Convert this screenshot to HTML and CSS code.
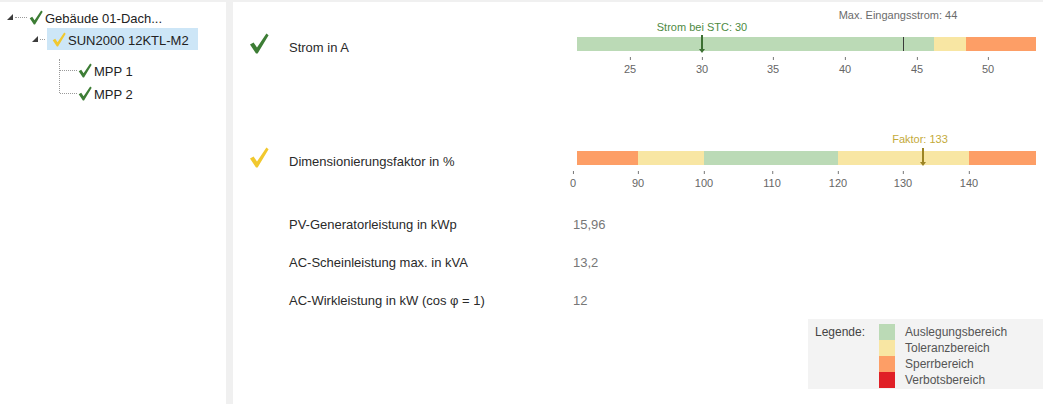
FILE: index.html
```html
<!DOCTYPE html>
<html lang="de">
<head>
    <meta charset="UTF-8">
    <meta name="viewport" content="width=device-width, initial-scale=1.0">
    <title>Auslegung</title>
    <link rel="stylesheet" href="styles.css">
</head>
<body>
<div class="app">

    <!-- Anlagenbaum -->
    <aside class="tree">
        <div class="node node-root">
            <span class="expander"></span>
            <span class="dots dots-short"></span>
            <svg class="tick-icon small ok" viewBox="0 0 20 21"><path d="M1 11.5 L4.6 9.4 L8 14.6 L17.4 0.6 L19.6 2.2 L8.6 20.6 L7 20.6 Z"/></svg>
            <span class="node-text">Gebäude 01-Dach...</span>
        </div>
        <div class="node node-child">
            <span class="expander"></span>
            <span class="dots dots-tiny"></span>
            <div class="node-selected">
                <svg class="tick-icon small warn" viewBox="0 0 20 21"><path d="M1 11.5 L4.6 9.4 L8 14.6 L17.4 0.6 L19.6 2.2 L8.6 20.6 L7 20.6 Z"/></svg>
                <span class="node-text">SUN2000 12KTL-M2</span>
            </div>
        </div>
        <div class="leaves">
            <div class="node node-leaf">
                <span class="dots dots-leaf"></span>
                <svg class="tick-icon small ok" viewBox="0 0 20 21"><path d="M1 11.5 L4.6 9.4 L8 14.6 L17.4 0.6 L19.6 2.2 L8.6 20.6 L7 20.6 Z"/></svg>
                <span class="node-text">MPP 1</span>
            </div>
            <div class="node node-leaf">
                <span class="dots dots-leaf"></span>
                <svg class="tick-icon small ok" viewBox="0 0 20 21"><path d="M1 11.5 L4.6 9.4 L8 14.6 L17.4 0.6 L19.6 2.2 L8.6 20.6 L7 20.6 Z"/></svg>
                <span class="node-text">MPP 2</span>
            </div>
        </div>
    </aside>

    <div class="divider"></div>

    <!-- Details -->
    <main class="details">

        <section class="metric metric-chart metric-first">
            <svg class="tick-icon big ok" viewBox="0 0 20 21"><path d="M1 11.5 L4.6 9.4 L8 14.6 L17.4 0.6 L19.6 2.2 L8.6 20.6 L7 20.6 Z"/></svg>
            <div class="metric-label">Strom in A</div>
            <div class="chart">
                <span class="note note-max" style="left: 321px;">Max. Eingangsstrom: 44</span>
                <span class="note note-ok" style="left: 125px;">Strom bei STC: 30</span>
                <div class="bar">
                    <span class="band band-ok" style="width: 357px;"></span>
                    <span class="band band-tol" style="width: 32px;"></span>
                    <span class="band band-lock" style="width: 70px;"></span>
                </div>
                <span class="limit" style="left: 326px;"></span>
                <span class="marker marker-ok" style="left: 125px;"></span>
                <div class="axis">
                    <span class="axis-tick" style="left: 53px;">25</span>
                    <span class="axis-tick" style="left: 125px;">30</span>
                    <span class="axis-tick" style="left: 196px;">35</span>
                    <span class="axis-tick" style="left: 268px;">40</span>
                    <span class="axis-tick" style="left: 340px;">45</span>
                    <span class="axis-tick" style="left: 411px;">50</span>
                </div>
            </div>
        </section>

        <section class="metric metric-chart">
            <svg class="tick-icon big warn" viewBox="0 0 20 21"><path d="M1 11.5 L4.6 9.4 L8 14.6 L17.4 0.6 L19.6 2.2 L8.6 20.6 L7 20.6 Z"/></svg>
            <div class="metric-label">Dimensionierungsfaktor in %</div>
            <div class="chart">
                <span class="note note-warn" style="left: 343px;">Faktor: 133</span>
                <div class="bar">
                    <span class="band band-lock" style="width: 61px;"></span>
                    <span class="band band-tol" style="width: 66px;"></span>
                    <span class="band band-ok" style="width: 134px;"></span>
                    <span class="band band-tol" style="width: 131px;"></span>
                    <span class="band band-lock" style="width: 67px;"></span>
                </div>
                <span class="marker marker-warn" style="left: 346px;"></span>
                <div class="axis">
                    <span class="axis-tick" style="left: -4px;">0</span>
                    <span class="axis-tick" style="left: 61px;">90</span>
                    <span class="axis-tick" style="left: 127px;">100</span>
                    <span class="axis-tick" style="left: 195px;">110</span>
                    <span class="axis-tick" style="left: 261px;">120</span>
                    <span class="axis-tick" style="left: 326px;">130</span>
                    <span class="axis-tick" style="left: 392px;">140</span>
                </div>
            </div>
        </section>

        <section class="metric metric-plain">
            <span></span>
            <div class="metric-label">PV-Generatorleistung in kWp</div>
            <div class="metric-value">15,96</div>
        </section>

        <section class="metric metric-plain">
            <span></span>
            <div class="metric-label">AC-Scheinleistung max. in kVA</div>
            <div class="metric-value">13,2</div>
        </section>

        <section class="metric metric-plain">
            <span></span>
            <div class="metric-label">AC-Wirkleistung in kW (cos φ = 1)</div>
            <div class="metric-value">12</div>
        </section>

        <div class="legend">
            <div class="legend-title">Legende:</div>
            <ul class="legend-list">
                <li><span class="swatch band-ok"></span>Auslegungsbereich</li>
                <li><span class="swatch band-tol"></span>Toleranzbereich</li>
                <li><span class="swatch band-lock"></span>Sperrbereich</li>
                <li><span class="swatch band-ban"></span>Verbotsbereich</li>
            </ul>
        </div>
    </main>
</div>
</body>
</html>
```

FILE: styles.css
```css
/* General */
body {
    margin: 0;
    background-color: #f0f0f0;
    font-family: "Liberation Sans", Arial, sans-serif;
    font-size: 13px;
    color: #222;
}

.app {
    display: flex;
    margin-top: 2px;
    height: 402px;
}

/* Tree */
.tree {
    width: 226px;
    background-color: #fff;
    padding-top: 4px;
    box-sizing: border-box;
}

.node {
    display: flex;
    align-items: center;
    height: 23px;
    position: relative;
}

.expander {
    width: 0;
    height: 0;
    border-left: 6px solid transparent;
    border-bottom: 6px solid #3c3c3c;
    margin-top: -1px;
}

.dots {
    border-top: 1px dotted #9a9a9a;
    height: 0;
}

.dots-short {
    width: 12px;
    margin: 0 2px 0 2px;
}

.dots-tiny {
    width: 5px;
    margin: 0 2px 0 2px;
}

.node-root {
    padding-left: 7px;
}

.node-child {
    padding-left: 32px;
    height: 22px;
    margin-top: -1px;
}

.node-selected {
    display: flex;
    align-items: center;
    height: 22px;
    width: 151px;
    padding-left: 5px;
    box-sizing: border-box;
    background-color: #cde6f7;
}

.node-text {
    margin-left: 2px;
    padding-top: 2px;
}

.leaves {
    margin-left: 59px;
    margin-top: 9px;
    border-left: 1px dotted #9a9a9a;
    height: 34px;
}

.dots-leaf {
    width: 17px;
    margin-right: 1px;
}

/* Check icons */
.tick-icon.small {
    width: 14px;
    height: 15px;
}

.tick-icon.big {
    width: 20px;
    height: 21px;
    margin-top: 30px;
}

.tick-icon.ok {
    fill: #3d7d35;
}

.tick-icon.warn {
    fill: #f1c82e;
}

.divider {
    width: 7px;
}

/* Details */
.details {
    flex: 1;
    background-color: #fff;
    padding: 0 7px 0 16px;
}

.metric {
    display: grid;
    grid-template-columns: 40px 284px 1fr;
}

.metric-chart {
    height: 88px;
    align-items: start;
}

.metric-first {
    height: 114px;
    margin-top: 1px;
}

.metric-chart .metric-label {
    margin-top: 37px;
    line-height: 16px;
}

.metric-plain {
    height: 38px;
    align-items: center;
}

.metric-label {
    color: #2a2a2a;
}

.metric-value {
    color: #777;
}

/* Charts */
.chart {
    position: relative;
    margin-left: 4px;
    width: 459px;
}

.bar {
    display: flex;
    margin-top: 34px;
    height: 14px;
}

.band {
    display: block;
    height: 100%;
}

.band-ok {
    background-color: #bbdab6;
}

.band-tol {
    background-color: #f8e6a3;
}

.band-lock {
    background-color: #fd9e66;
}

.band-ban {
    background-color: #e01f26;
}

.note {
    position: absolute;
    transform: translateX(-50%);
    font-size: 11px;
    line-height: 12px;
    white-space: nowrap;
}

.note-max {
    top: 6px;
    color: #6b6b6b;
}

.note-ok {
    top: 18px;
    color: #4e8a43;
}

.note-warn {
    top: 16px;
    color: #c4aa3a;
}

.limit {
    position: absolute;
    top: 34px;
    width: 1px;
    height: 14px;
    background-color: #3a3a3a;
}

.marker {
    position: absolute;
    top: 32px;
    width: 2px;
    height: 14px;
    margin-left: -1px;
}

.marker::after {
    content: "";
    position: absolute;
    left: -2px;
    bottom: -4px;
    border-left: 3px solid transparent;
    border-right: 3px solid transparent;
    border-top: 4px solid;
}

.marker-ok {
    background-color: #3b6f32;
    color: #3b6f32;
}

.marker-warn {
    top: 31px;
    background-color: #9c8424;
    color: #9c8424;
}

.axis {
    position: relative;
    height: 30px;
}

.axis-tick {
    position: absolute;
    top: 6px;
    transform: translateX(-50%);
    padding-top: 6px;
    font-size: 11px;
    line-height: 12px;
    color: #666;
}

.axis-tick::before {
    content: "";
    position: absolute;
    top: 0;
    left: 50%;
    width: 1px;
    height: 3px;
    background-color: #777;
}

/* Legend */
.legend {
    display: flex;
    margin-left: auto;
    margin-right: -7px;
    width: 235px;
    height: 70px;
    box-sizing: border-box;
    padding: 5px 0 0 7px;
    background-color: #f3f3f3;
    font-size: 12px;
}

.legend-title {
    width: 64px;
    line-height: 16px;
    color: #444;
}

.legend-list {
    list-style: none;
    margin: 0;
    padding: 0;
}

.legend-list li {
    display: flex;
    align-items: center;
    height: 16px;
    color: #555;
}

.swatch {
    width: 16px;
    height: 16px;
    margin-right: 10px;
}
```
